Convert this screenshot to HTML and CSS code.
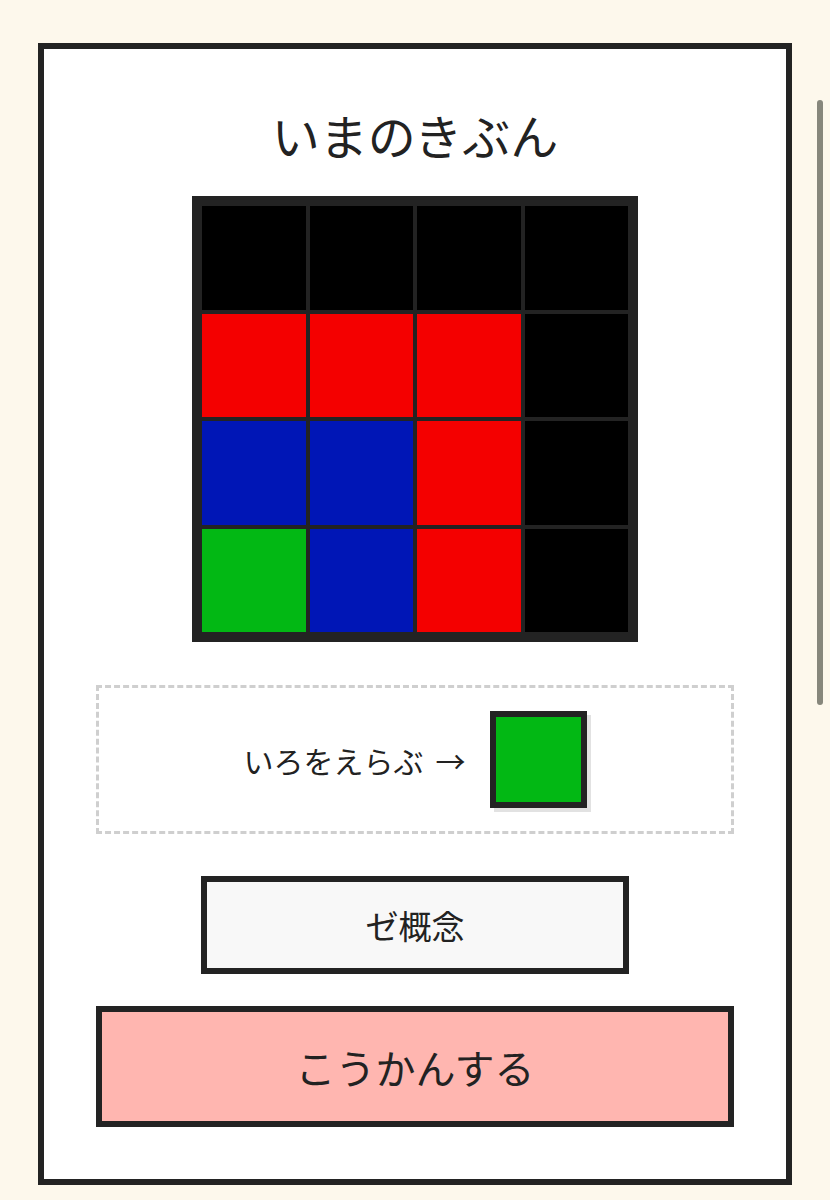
FILE: index.html
```html
<!DOCTYPE html>
<html lang="ja">
<head>
<meta charset="utf-8">
<title>いまのきぶん</title>
<link rel="stylesheet" href="styles.css">
</head>
<body>
<main class="card">
  <h1 class="title">いまのきぶん</h1>
  <div class="grid">
    <div class="cell c-black"></div><div class="cell c-black"></div><div class="cell c-black"></div><div class="cell c-black"></div>
    <div class="cell c-red"></div><div class="cell c-red"></div><div class="cell c-red"></div><div class="cell c-black"></div>
    <div class="cell c-blue"></div><div class="cell c-blue"></div><div class="cell c-red"></div><div class="cell c-black"></div>
    <div class="cell c-green"></div><div class="cell c-blue"></div><div class="cell c-red"></div><div class="cell c-black"></div>
  </div>
  <div class="picker">
    <span class="pick-label">いろをえらぶ<span class="arrow">→</span></span>
    <span class="swatch"></span>
  </div>
  <button class="btn btn-concept">ゼ概念</button>
  <button class="btn btn-exchange">こうかんする</button>
</main>
<div class="scrollbar"></div>
</body>
</html>
```

FILE: styles.css
```css
html, body {
  margin: 0;
  height: 100%;
  overflow: hidden;
  background: #fdf8ec;
}

body {
  padding: 43px 38px 0;
  box-sizing: border-box;
  font-family: "Noto Sans CJK JP", "Noto Sans", sans-serif;
  color: #222;
}

.card {
  box-sizing: border-box;
  border: 6px solid #232323;
  background: #fff;
  padding: 55px 52px 52px;
  display: flex;
  flex-direction: column;
  align-items: center;
}

.title {
  margin: 0;
  font-size: 48px;
  line-height: 60px;
  font-weight: 400;
  color: #222;
}

.grid {
  margin-top: 32px;
  width: 446px;
  box-sizing: border-box;
  padding: 10px;
  background: #232323;
  display: grid;
  grid-template-columns: repeat(4, 1fr);
  gap: 4px;
}

.cell {
  aspect-ratio: 1 / 1;
}

.c-black { background: #000; }
.c-red { background: #f40000; }
.c-blue { background: #0016b6; }
.c-green { background: #02b814; }

.picker {
  margin-top: 43px;
  align-self: stretch;
  border: 3px dashed #cfcfcf;
  padding: 23px;
  display: flex;
  align-items: center;
  justify-content: center;
}

.pick-label {
  font-size: 30px;
  line-height: 1;
  color: #222;
}

.arrow {
  margin-left: 12px;
}

.swatch {
  margin-left: 24px;
  width: 97px;
  height: 97px;
  box-sizing: border-box;
  border: 6px solid #232323;
  background: #02b814;
  box-shadow: 4px 4px 0 #e2e2e2;
}

.btn {
  font-family: inherit;
  font-weight: 400;
  color: #222;
  border: 6px solid #232323;
  box-sizing: border-box;
  padding: 0;
  cursor: pointer;
}

.btn-concept {
  margin-top: 42px;
  width: 428px;
  height: 98px;
  background: #f8f8f8;
  font-size: 33px;
}

.btn-exchange {
  margin-top: 32px;
  align-self: stretch;
  height: 121px;
  background: #ffb6b0;
  font-size: 40px;
}

.scrollbar {
  position: fixed;
  top: 100px;
  right: 7px;
  width: 6px;
  height: 605px;
  border-radius: 3px;
  background: #87877c;
}
```
